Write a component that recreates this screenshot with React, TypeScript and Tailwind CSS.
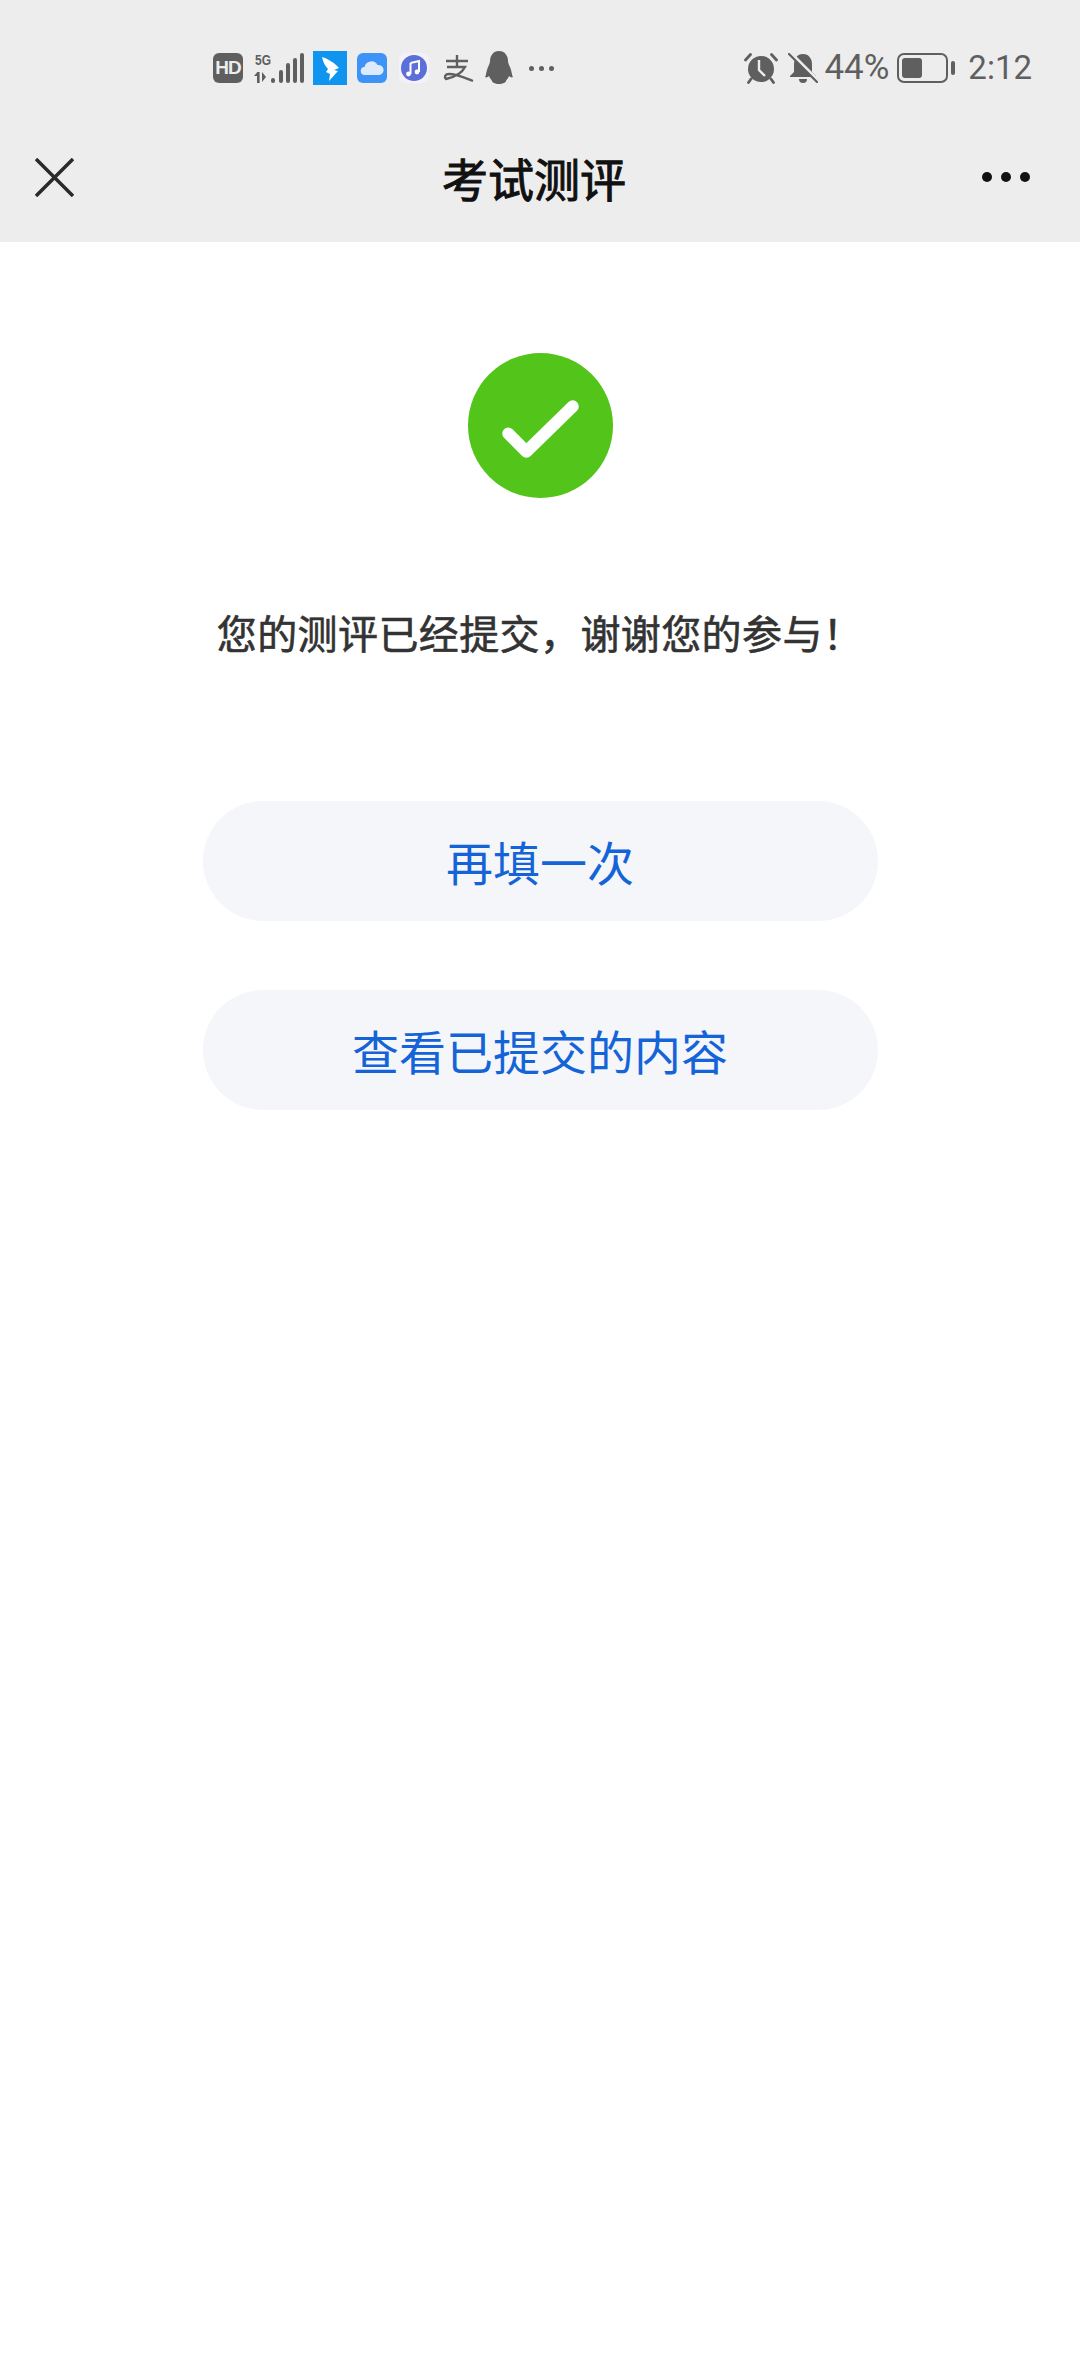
const cjk = { fontFamily: '"Noto Sans CJK SC", sans-serif' };

const HdIcon = () => (
  <div className="w-[30px] h-[30px] rounded-[6px] bg-[#5f5f5f] flex items-center justify-center text-[#ededed] text-[19px] font-bold font-['Liberation_Sans',sans-serif] tracking-[-1px]">
    HD
  </div>
);

const Signal = () => (
  <svg width="50" height="32" viewBox="0 0 50 32" fill="#5f5f5f" className="ml-[11px]">
    <text x="1" y="13" fontSize="15" fontWeight="700" fontFamily="Liberation Sans" textLength="16" lengthAdjust="spacingAndGlyphs">5G</text>
    <rect x="3" y="20" width="2.6" height="11" />
    <path d="M0 24l3-3.5v3.5zM8 20l4 5-4 5z" />
    <rect x="17" y="26" width="4" height="5" rx="2" />
    <rect x="25" y="18" width="4" height="13" rx="2" />
    <rect x="32" y="11" width="4" height="20" rx="2" />
    <rect x="39" y="6" width="4" height="25" rx="2" />
    <rect x="46" y="1" width="4" height="30" rx="2" />
  </svg>
);

const DingIcon = () => (
  <svg width="34" height="34" viewBox="0 0 34 34" className="ml-[9px]">
    <rect width="34" height="34" fill="#0f94f0" />
    <path d="M9 6c6 2 13 6 17 11l-5 2 4 1-9 10 1-7-4-2 2-3C12 15 10 11 9 6z" fill="#fff" />
  </svg>
);

const CloudIcon = () => (
  <svg width="30" height="30" viewBox="0 0 30 30" className="ml-[10px]">
    <rect width="30" height="30" rx="6" fill="#3d94f6" />
    <path d="M8 22a4 4 0 0 1-.5-8 7 7 0 0 1 13-2 5 5 0 0 1 2 10z" fill="#dceafc" />
  </svg>
);

const MusicIcon = () => (
  <svg width="30" height="30" viewBox="0 0 30 30" className="ml-[12px]">
    <rect width="30" height="30" rx="7" fill="#f4f2f8" />
    <circle cx="15" cy="15" r="13" fill="#5a6fd8" />
    <path d="M11.5 10l8.5-2v11M11.5 10v11" stroke="#fff" strokeWidth="2" fill="none" />
    <circle cx="9.5" cy="21" r="2.4" fill="#fff" />
    <circle cx="18" cy="19" r="2.4" fill="#fff" />
  </svg>
);

const AlipayIcon = () => (
  <svg width="34" height="30" viewBox="0 0 32 30" fill="none" stroke="#5f5f5f" strokeWidth="2.4" className="ml-[12px]">
    <path d="M4 8h22M15 2v12M5 14h18c-3 6-10 10-19 12-2-2-1-5 3-5 8 0 16 4 24 7" />
  </svg>
);

const PenguinIcon = () => (
  <svg width="30" height="34" viewBox="0 0 30 34" fill="#5f5f5f" className="ml-[9px]">
    <path d="M15 0c6 0 9 5 9 10 0 3 2 5 3 9 1 3 1 6 2 7-1 1-3 0-4-1-1 3-3 4-3 5s-3 3-7 3-7-2-7-3-2-2-3-5c-1 1-3 2-4 1 1-1 1-4 2-7 1-4 3-6 3-9C6 5 9 0 15 0z" />
  </svg>
);

const AlarmIcon = () => (
  <svg width="34" height="32" viewBox="0 0 34 32">
    <circle cx="17" cy="17" r="13" fill="#5f5f5f" />
    <path d="M15 8v10l6 6" stroke="#ededed" strokeWidth="2.4" fill="none" />
    <path d="M1.5 8l5-5.5M32.500 8l-5-5.500M7 27l-2.500 3.500M27 27l2.500 3.500" stroke="#5f5f5f" strokeWidth="2.8" strokeLinecap="round" />
  </svg>
);

const BellOffIcon = () => (
  <svg width="30" height="30" viewBox="0 0 30 30" className="ml-[10px]">
    <path d="M15 1c6 0 9 5 9 10v8l4 4v1H2v-1l4-4v-8c0-5 3-10 9-10z" fill="#5f5f5f" />
    <path d="M11 26a4 4 0 0 0 8 0z" fill="#5f5f5f" />
    <path d="M2.500 0l28 28" stroke="#ededed" strokeWidth="3.5" />
    <path d="M1 1l28 28" stroke="#5f5f5f" strokeWidth="2.2" strokeLinecap="round" />
  </svg>
);

const Battery = () => (
  <div className="flex items-center gap-[3px] ml-[8px]">
    <div className="w-[51px] h-[30px] rounded-[7px] border-[2px] border-[#5f5f5f] p-[3px]">
      <div className="w-[20px] h-full rounded-[3px] bg-[#5f5f5f]" />
    </div>
    <div className="w-[4px] h-[14px] rounded-[2px] bg-[#5f5f5f]" />
  </div>
);

const StatusBar = () => (
  <div className="h-[120px] pt-[16px] pl-[213px] pr-[48px] flex items-center justify-between text-[#5f5f5f]">
    <div className="flex items-center">
      <HdIcon />
      <Signal />
      <DingIcon />
      <CloudIcon />
      <MusicIcon />
      <AlipayIcon />
      <PenguinIcon />
      <div className="flex gap-[5px] ml-[15px]">
        <span className="w-[5px] h-[5px] rounded-full bg-[#5f5f5f]" />
        <span className="w-[5px] h-[5px] rounded-full bg-[#5f5f5f]" />
        <span className="w-[5px] h-[5px] rounded-full bg-[#5f5f5f]" />
      </div>
    </div>
    <div className="flex items-center font-['Roboto',sans-serif] text-[35px]">
      <AlarmIcon />
      <BellOffIcon />
      <span className="ml-[6px]">44%</span>
      <Battery />
      <span className="ml-[13px] text-[33px]">2:12</span>
    </div>
  </div>
);

const NavBar = () => (
  <div className="h-[122px] pl-[35px] pr-[50px] pb-[8px] flex items-center">
    <svg width="39" height="39" viewBox="0 0 39 39" stroke="#2a2a2a" strokeWidth="3.5" fill="none">
      <path d="M1 1l37 37M38 1L1 38" />
    </svg>
    <h1 className="flex-1 pl-[12px] text-center text-[46px] text-[#111111] [-webkit-text-stroke:1px_#111111]" style={cjk}>
      考试测评
    </h1>
    <div className="flex gap-[9px]">
      <span className="w-[10px] h-[10px] rounded-full bg-[#111111]" />
      <span className="w-[10px] h-[10px] rounded-full bg-[#111111]" />
      <span className="w-[10px] h-[10px] rounded-full bg-[#111111]" />
    </div>
  </div>
);

const PillButton = ({ label }: { label: string }) => (
  <button className="w-[675px] h-[120px] rounded-[60px] bg-[#f5f6fa] text-[47px] text-[#1464d8]" style={cjk}>
    {label}
  </button>
);

export default function App() {
  return (
    <div className="min-h-[2376px] bg-white flex flex-col">
      <div className="bg-[#ededed] h-[242px]">
        <StatusBar />
        <NavBar />
      </div>

      <div className="flex flex-col items-center pt-[111px]">
        <div className="w-[145px] h-[145px] rounded-full bg-[#52c41a] flex items-center justify-center">
          <svg width="145" height="145" viewBox="0 0 144 144" fill="none">
            <path d="M40 80l18 18 46-45" stroke="#fff" strokeWidth="12" strokeLinecap="round" strokeLinejoin="round" />
          </svg>
        </div>
        <p className="mt-[104px] text-[40px] text-[#333333] leading-[60px] tracking-[0.4px] [-webkit-text-stroke:0.6px_#333333]" style={cjk}>
          您的测评已经提交，谢谢您的参与！
        </p>
        <div className="mt-[139px] flex flex-col gap-[69px]">
          <PillButton label="再填一次" />
          <PillButton label="查看已提交的内容" />
        </div>
      </div>
    </div>
  );
}
